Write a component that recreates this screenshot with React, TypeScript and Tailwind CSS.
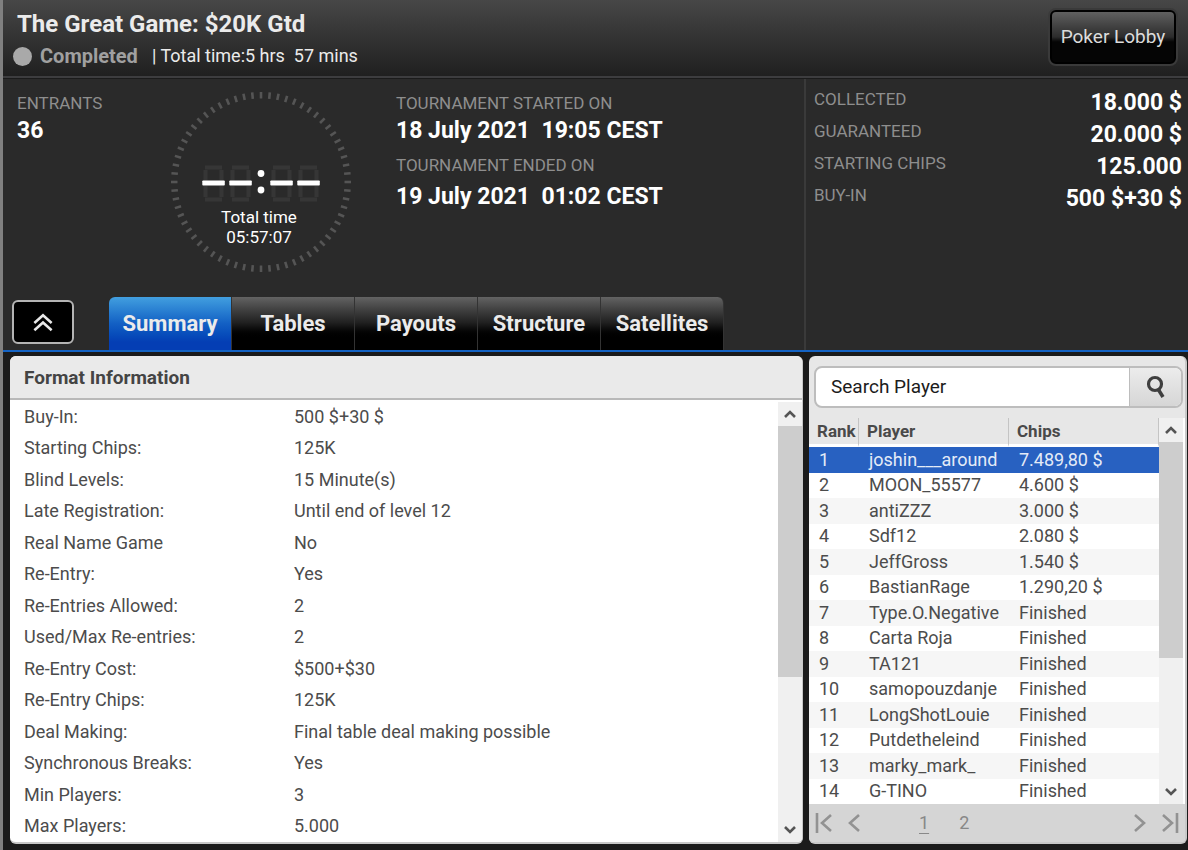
import { useState } from 'react';
import clsx from 'clsx';

const tabs = ['Summary', 'Tables', 'Payouts', 'Structure', 'Satellites'];

const prizeInfo = [
  ['COLLECTED', '18.000 $'],
  ['GUARANTEED', '20.000 $'],
  ['STARTING CHIPS', '125.000'],
  ['BUY-IN', '500 $+30 $'],
];

const formatInfo = [
  ['Buy-In:', '500 $+30 $'],
  ['Starting Chips:', '125K'],
  ['Blind Levels:', '15 Minute(s)'],
  ['Late Registration:', 'Until end of level 12'],
  ['Real Name Game', 'No'],
  ['Re-Entry:', 'Yes'],
  ['Re-Entries Allowed:', '2'],
  ['Used/Max Re-entries:', '2'],
  ['Re-Entry Cost:', '$500+$30'],
  ['Re-Entry Chips:', '125K'],
  ['Deal Making:', 'Final table deal making possible'],
  ['Synchronous Breaks:', 'Yes'],
  ['Min Players:', '3'],
  ['Max Players:', '5.000'],
];

const players = [
  { name: 'joshin___around', chips: '7.489,80 $' },
  { name: 'MOON_55577', chips: '4.600 $' },
  { name: 'antiZZZ', chips: '3.000 $' },
  { name: 'Sdf12', chips: '2.080 $' },
  { name: 'JeffGross', chips: '1.540 $' },
  { name: 'BastianRage', chips: '1.290,20 $' },
  { name: 'Type.O.Negative', chips: 'Finished' },
  { name: 'Carta Roja', chips: 'Finished' },
  { name: 'TA121', chips: 'Finished' },
  { name: 'samopouzdanje', chips: 'Finished' },
  { name: 'LongShotLouie', chips: 'Finished' },
  { name: 'Putdetheleind', chips: 'Finished' },
  { name: 'marky_mark_', chips: 'Finished' },
  { name: 'G-TINO', chips: 'Finished' },
];

// unlit seven segment digit with only the middle bar on
function Digit({ x }: { x: number }) {
  return (
    <g transform={`translate(${x} 74)`}>
      <g stroke="#363636" strokeWidth="4">
        <path d="M3 2.5H20M3 34.5H20" />
        <path d="M3.5 5V16.500M19.500 5V16.500M3.500 21V32M19.500 21V32" />
      </g>
      <rect x="0.300" y="15.500" width="22.500" height="5" rx="0.800" fill="#fff" />
    </g>
  );
}

function Clock() {
  return (
    <div className="grid size-[182px] shrink-0">
      <svg viewBox="0 0 182 182" className="col-start-1 row-start-1 size-full" aria-hidden="true">
        {Array.from({ length: 64 }, (_, i) => (
          <path key={i} d="M91 1V7.500" stroke="#555" strokeWidth="2.600" transform={`rotate(${(i * 360) / 64} 91 91)`} />
        ))}
        <Digit x={32} />
        <Digit x={59} />
        <Digit x={100} />
        <Digit x={127} />
        <circle cx="91" cy="82.500" r="3.400" fill="#fff" />
        <circle cx="91" cy="99" r="3.400" fill="#fff" />
      </svg>
      <div className="col-start-1 row-start-1 self-end pr-1 pb-[26px] text-center text-[17px] leading-5 text-white">
        <div>Total time</div>
        <div>05:57:07</div>
      </div>
    </div>
  );
}

function ScrollArrow({ up }: { up?: boolean }) {
  return (
    <button aria-label={up ? 'Scroll up' : 'Scroll down'} className="flex h-6 w-full shrink-0 items-center justify-center">
      <svg width="12" height="10" viewBox="0 0 12 10" fill="none" stroke="#555" strokeWidth="2.600">
        <path d={up ? 'M1 8L6 3L11 8' : 'M1 2L6 7L11 2'} />
      </svg>
    </button>
  );
}

function Scrollbar() {
  return (
    <div className="flex w-6 shrink-0 flex-col bg-[#f0f0f0]">
      <ScrollArrow up />
      <div className="min-h-0 flex-1">
        <div className="h-[64%] bg-[#cdcdcd]" />
      </div>
      <ScrollArrow />
    </div>
  );
}

function PagerButton({ label, d }: { label: string; d: string }) {
  return (
    <button aria-label={label} className="flex items-center">
      <svg width="18" height="20" viewBox="0 0 18 20" fill="none" stroke="#929292" strokeWidth="2.600">
        <path d={d} />
      </svg>
    </button>
  );
}

function Header() {
  return (
    <header className="flex h-[78px] shrink-0 items-start justify-between border-b-2 border-[#3d3d3f] bg-linear-to-b from-[#474747] to-[#202020] pr-2.5 pl-2.5">
      <div className="pt-2">
        <h1 className="pl-1 text-2xl leading-8 font-bold text-[#ebebeb]">The Great Game: $20K Gtd</h1>
        <div className="flex items-center text-lg leading-8">
          <span className="mr-2 size-[19px] rounded-full bg-[#a9a9a9]" />
          <span className="text-xl leading-8 font-bold text-[#a0a0a0]">Completed</span>
          <span className="pl-3.5 whitespace-pre text-[#ebebeb]">| Total time:5 hrs  57 mins</span>
        </div>
      </div>
      <button className="mt-2 h-[58px] w-[130px] rounded-lg border-2 border-[#3a3a3a] bg-black p-0.5 text-[19px] text-[#dcdcdc]">
        <span className="flex h-full items-center justify-center rounded-sm bg-linear-to-b from-[#606060] from-0% via-[#2c2c2c] via-50% to-[#050505] to-60%">
          Poker Lobby
        </span>
      </button>
    </header>
  );
}

function Overview() {
  const [active, setActive] = useState('Summary');

  return (
    <section className="flex shrink-0 border-t border-[#1b1b1b] border-b-2 border-b-[#1463c4] bg-[#2a2a2a]">
      <div className="flex-1">
        <div className="flex h-[218px] pt-3 pl-[13px]">
          <dl className="w-[154px] pt-0.5 pl-px">
            <dt className="text-[17px] leading-5 text-[#8e8e8e]">ENTRANTS</dt>
            <dd className="text-[23px] leading-9 font-bold text-white">36</dd>
          </dl>
          <Clock />
          <dl className="pt-0.5 pl-11 whitespace-pre">
            <dt className="text-[17px] leading-5 text-[#8e8e8e]">TOURNAMENT STARTED ON</dt>
            <dd className="text-[23px] leading-9 font-bold text-white">18 July 2021  19:05 CEST</dd>
            <dt className="pt-1.5 text-[17px] leading-5 text-[#8e8e8e]">TOURNAMENT ENDED ON</dt>
            <dd className="pt-1 text-[23px] leading-9 font-bold text-white">19 July 2021  01:02 CEST</dd>
          </dl>
        </div>
        <div className="flex h-[53px] items-start pl-[9px]">
          <button
            aria-label="Collapse"
            className="mt-[3px] mr-[35px] flex h-11 w-[62px] items-center justify-center rounded-md border-2 border-[#b4b4b4] bg-black"
          >
            <svg width="20" height="19" viewBox="0 0 22 20" fill="none" stroke="#e8e8e8" strokeWidth="2.800">
              <path d="M1.500 10.500L11 2L20.500 10.500M1.500 18.500L11 10L20.500 18.500" />
            </svg>
          </button>
          <nav className="flex h-full" role="tablist">
            {tabs.map((tab) => (
              <button
                key={tab}
                role="tab"
                aria-selected={tab === active}
                onClick={() => setActive(tab)}
                className={clsx(
                  'w-[123px] border-r border-[#333] bg-linear-to-b text-[22px] font-bold text-[#ebebeb] first:rounded-tl-md last:rounded-tr-md',
                  tab === active
                    ? 'from-[#429fdf] via-[#1360c4] via-50% to-[#043eb4] to-85%'
                    : 'from-[#636363] via-[#212121] via-48% to-black to-80%'
                )}
              >
                {tab}
              </button>
            ))}
          </nav>
        </div>
      </div>
      <dl className="flex w-[384px] flex-col border-l-2 border-[#3a3a3a] pt-1 pr-1.5 pl-2">
        {prizeInfo.map(([label, value]) => (
          <div key={label} className="flex h-8 justify-between">
            <dt className="text-[17px] leading-8 text-[#8e8e8e]">{label}</dt>
            <dd className="pt-1 text-[23px] leading-8 font-bold text-white">{value}</dd>
          </div>
        ))}
      </dl>
    </section>
  );
}

function FormatPanel() {
  return (
    <section className="flex min-w-0 flex-1 flex-col overflow-hidden rounded-md border-r border-b-2 border-[#c8c8c8] bg-white">
      <h2 className="h-11 shrink-0 border-b-2 border-[#b9b9b9] bg-[#eaeaea] pl-3.5 text-[19px] leading-[43px] font-bold text-[#444]">
        Format Information
      </h2>
      <div className="flex min-h-0 flex-1">
        <dl className="grid flex-1 auto-rows-fr pt-px pl-3.5 text-lg text-[#4c4c4c]">
          {formatInfo.map(([label, value]) => (
            <div key={label} className="flex items-center leading-6">
              <dt className="w-[270px]">{label}</dt>
              <dd>{value}</dd>
            </div>
          ))}
        </dl>
        <div className="flex pt-0.5">
          <Scrollbar />
        </div>
      </div>
    </section>
  );
}

function PlayersPanel() {
  return (
    <section className="flex w-[378px] shrink-0 flex-col overflow-hidden rounded-md border-r-2 border-b-2 border-[#c8c8c8] bg-[#e7e7e7]">
      <form
        role="search"
        onSubmit={(e) => e.preventDefault()}
        className="mt-2.5 mr-0.5 mb-2.5 ml-[5px] flex h-[42px] shrink-0 overflow-hidden rounded-lg border-2 border-[#bdbdbd] bg-white"
      >
        <input
          aria-label="Search Player"
          placeholder="Search Player"
          className="min-w-0 flex-1 pl-[15px] text-[19px] text-black outline-none placeholder:text-[#1c1c1c]"
        />
        <button aria-label="Search" className="flex w-[52px] items-center justify-center border-l border-[#bdbdbd] bg-linear-to-b from-[#ececec] to-[#d6d6d6]">
          <svg width="20" height="24" viewBox="0 0 20 24" fill="none" stroke="#3f3f3f">
            <circle cx="9" cy="9" r="6.500" strokeWidth="3.200" />
            <path d="M12 14L17 22" strokeWidth="3.600" />
          </svg>
        </button>
      </form>
      <div className="flex min-h-0 flex-1 bg-white pr-0.5">
        <table className="h-full flex-1 table-fixed border-separate border-spacing-0 text-left text-lg leading-5 text-[#4c4c4c]">
          <thead>
            <tr className="h-[29px] text-[17px] text-[#4a4a4a]">
              <th className="w-[50px] border-r border-b-3 border-r-[#c4c4c4] border-b-white bg-[#e7e7e7] p-0 pl-2 font-bold">Rank</th>
              <th className="w-[150px] border-r border-b-3 border-r-[#c4c4c4] border-b-white bg-[#e7e7e7] p-0 pl-2 font-bold">Player</th>
              <th className="border-r border-b-3 border-r-[#c4c4c4] border-b-white bg-[#e7e7e7] p-0 pl-2 font-bold">Chips</th>
            </tr>
          </thead>
          <tbody>
            {players.map((player, i) => (
              <tr key={player.name} className={clsx(i === 0 ? 'bg-[#2861c1] text-[#e4ebf7]' : 'odd:bg-[#f6f6f6]')}>
                <td className="p-0 pl-2.5">{i + 1}</td>
                <td className="p-0 pl-2.5">{player.name}</td>
                <td className="p-0 pl-2.5">{player.chips}</td>
              </tr>
            ))}
          </tbody>
        </table>
        <Scrollbar />
      </div>
      <footer className="flex h-[38px] shrink-0 items-center justify-between bg-[#d5d5d5] px-1.5 text-base text-[#888]">
        <div className="flex items-center gap-3">
          <PagerButton label="First page" d="M2 0V20M16 2L7 10L16 18" />
          <PagerButton label="Previous page" d="M14 2L5 10L14 18" />
          <a href="#1" className="ml-11 text-lg underline underline-offset-4">1</a>
          <a href="#2" className="ml-[18px] text-lg">2</a>
        </div>
        <div className="flex items-center gap-3">
          <PagerButton label="Next page" d="M4 2L13 10L4 18" />
          <PagerButton label="Last page" d="M2 2L11 10L2 18M16 0V20" />
        </div>
      </footer>
    </section>
  );
}

export default function App() {
  return (
    <div className="flex h-screen min-h-[720px] flex-col border-l-3 border-[#808080] bg-[#1b1b1b] font-['Roboto',sans-serif]">
      <Header />
      <Overview />
      <main className="flex min-h-0 flex-1 gap-1.5 pt-1 pr-px pb-1.5 pl-[7px]">
        <FormatPanel />
        <PlayersPanel />
      </main>
    </div>
  );
}
